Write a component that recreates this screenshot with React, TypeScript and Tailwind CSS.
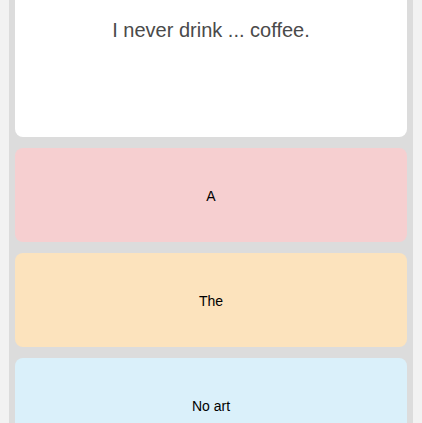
export default function App() {
  const options = [
    { label: "A", bg: "bg-[#f6cfd0]" },
    { label: "The", bg: "bg-[#fce3bd]" },
    { label: "No art", bg: "bg-[#daf0fa]" },
  ];

  return (
    <div className="h-[423px] overflow-hidden bg-[#f2f2f2] px-[9px] font-['Liberation_Sans',Arial,sans-serif]">
      <div className="flex h-full flex-col gap-[11px] bg-[#dcdcdc] px-[6px] pb-4">
        {/* Question card (top cut off) */}
        <div className="flex h-[137px] shrink-0 justify-center rounded-b-lg bg-white pt-[15px]">
          <p className="text-[20px] text-[#4a4a4a]">I never drink ... coffee.</p>
        </div>

        {options.map((o) => (
          <button
            key={o.label}
            className={`flex h-[94px] shrink-0 items-center justify-center rounded-lg pt-[2px] text-[14px] text-black ${o.bg}`}
          >
            {o.label}
          </button>
        ))}
      </div>
    </div>
  );
}
